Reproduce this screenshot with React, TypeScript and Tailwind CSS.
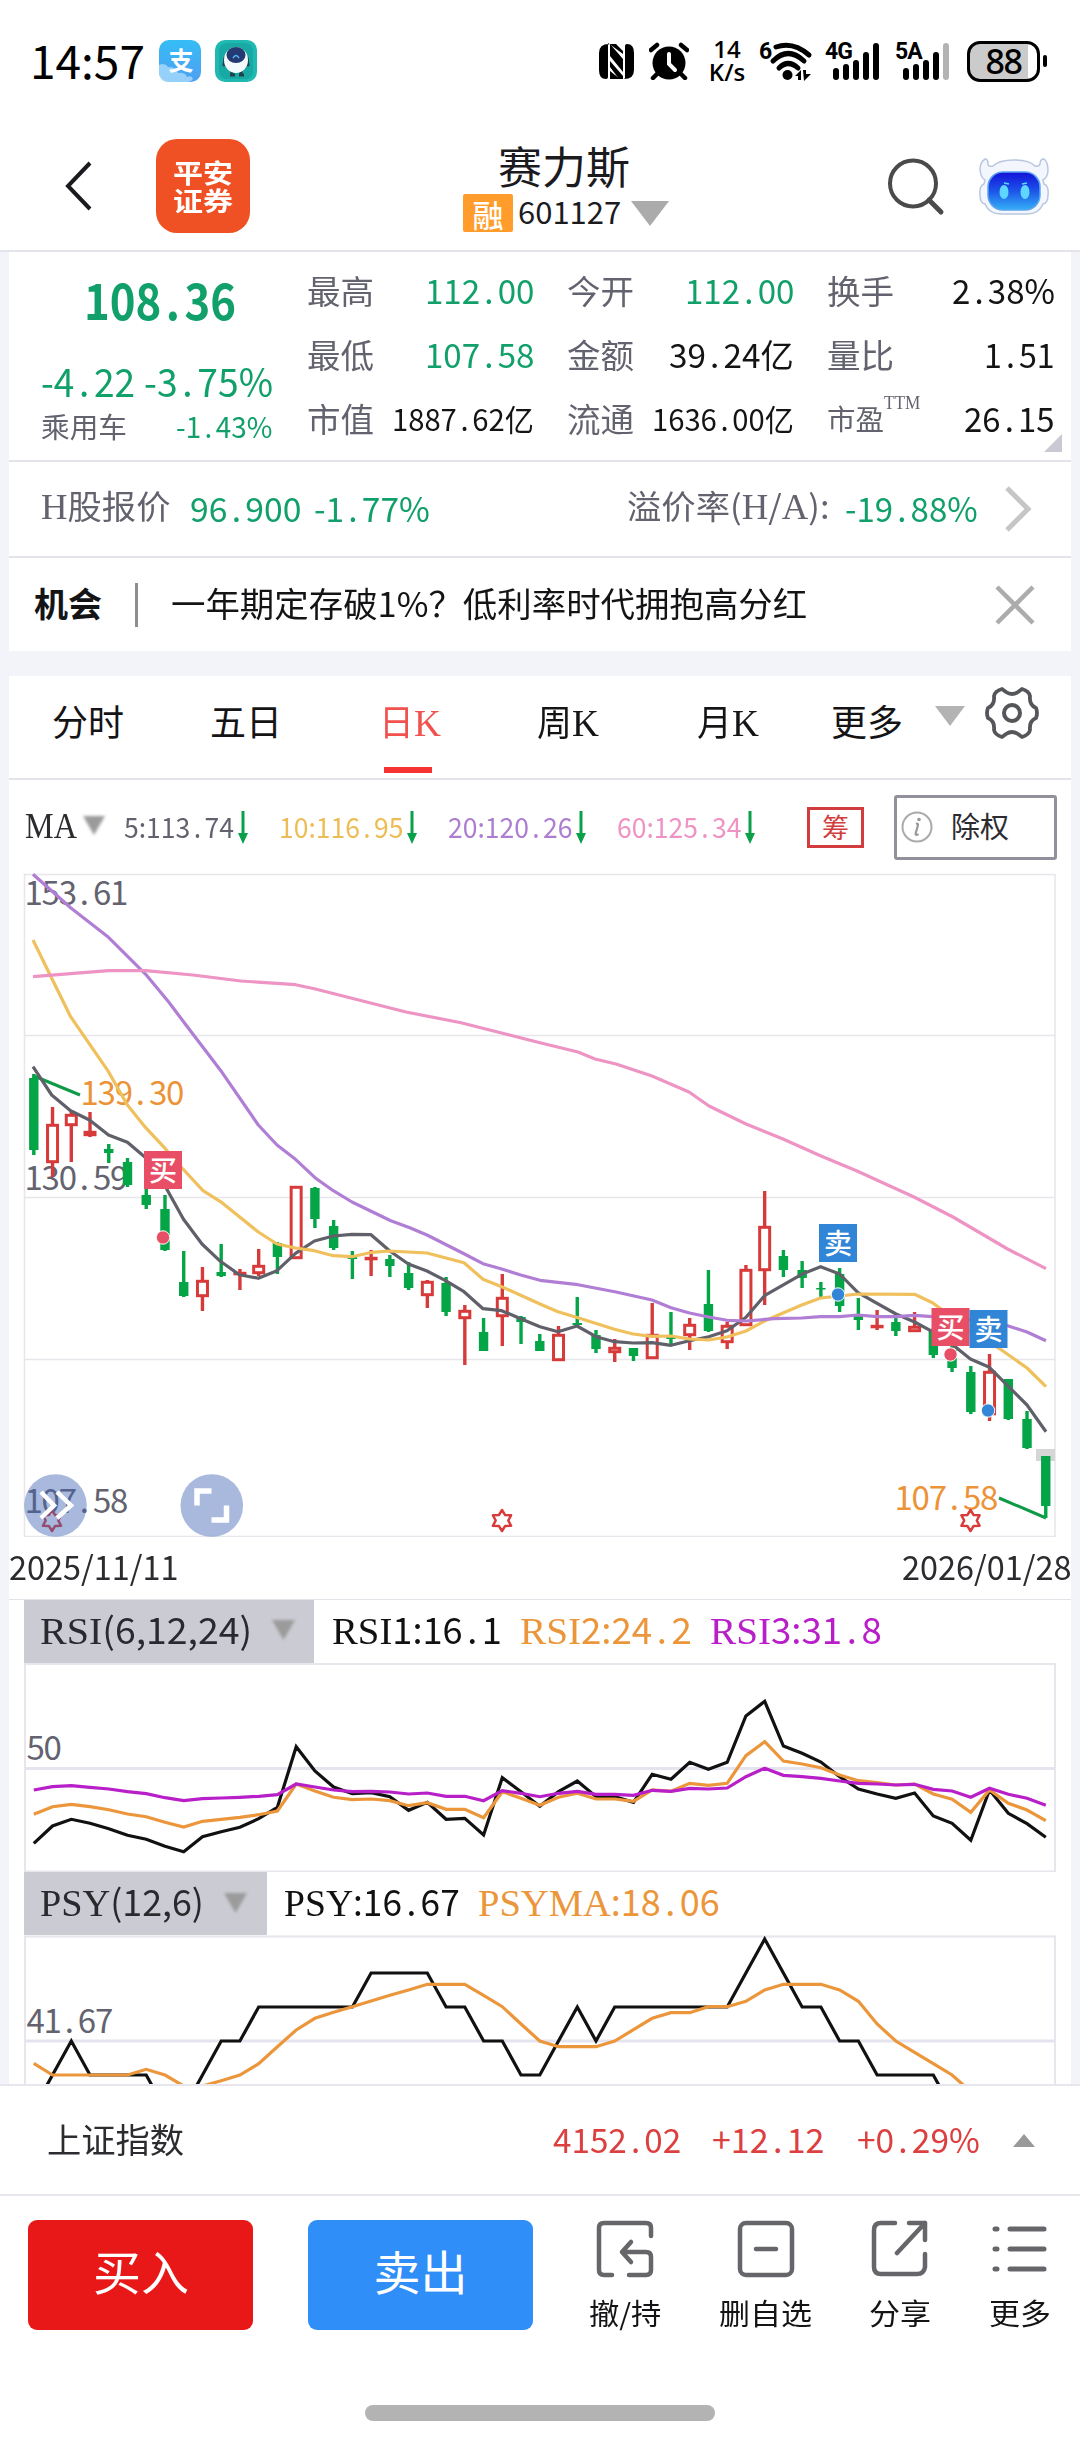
import { useLayoutEffect, useRef, useState } from "react";

/* Text set to a known width: Latin capitals in a serif, digits and hanzi in Noto, full-cell periods. */
function T({ s, w, c = "" }: { s: string; w: number; c?: string }) {
  const ref = useRef<HTMLSpanElement>(null);
  const [k, setK] = useState(1);
  useLayoutEffect(() => {
    if (ref.current) setK(w / ref.current.offsetWidth);
  }, [s, w]);
  const runs = s.match(/[A-Za-z%]+|\.|[^A-Za-z%.]+/g) ?? [];
  return (
    <span className={"block shrink-0 leading-none " + c} style={{ width: w }}>
      <span ref={ref} className="inline-block origin-left whitespace-pre" style={{ transform: `scaleX(${k})` }}>
        {runs.map((r, i) =>
          r === "." ? (
            <span key={i} className="inline-block w-[0.53em] text-center">.</span>
          ) : /[A-Za-z]/.test(r) ? (
            <span key={i} className="font-['Liberation_Serif',serif] text-[1.07em] leading-none">{r}</span>
          ) : (
            <span key={i}>{r}</span>
          )
        )}
      </span>
    </span>
  );
}

const GREEN = "text-[#12a06a]";
const GRAY = "text-[#63636f]";

function Down({ c = "", w = 23, h = 19, fill = "#9b9b9b", soft = false }) {
  return (
    <svg className={"shrink-0 " + c + (soft ? " blur-[1.5px]" : "")} width={w} height={h} viewBox="0 0 10 10" preserveAspectRatio="none">
      <path d="M0 0H10L5 10Z" fill={fill} />
    </svg>
  );
}

function Signal({ label, weak }: { label: string; weak?: boolean }) {
  return (
    <div className="relative h-[38px] w-[55px]">
      <span className="absolute left-0 top-0 font-['Roboto',sans-serif] text-[23px] font-bold leading-[20px] tracking-[-1px]">{label}</span>
      <svg className="absolute left-0 top-0" width="55" height="38">
        <g fill="#000">
          <rect x="8" y="26" width="6" height="12" rx="3" />
          <rect x="18" y="22" width="6" height="16" rx="3" />
          <rect x="28" y="18" width="6" height="20" rx="3" />
          <rect x="38" y="10" width="6" height="28" rx="3" />
          <rect x="48" y="1" width="6" height="37" rx="3" fill={weak ? "#b3b3b3" : "#000"} />
        </g>
      </svg>
    </div>
  );
}

function StatusBar() {
  return (
    <div className="flex h-[122px] items-center pl-[30px] text-black">
      <T s="14:57" w={115} c="pb-[5px] text-[46px]" />
      <svg className="ml-[14px] shrink-0" width="42" height="42" viewBox="0 0 42 42">
        <defs>
          <linearGradient id="pay" x1="0" y1="0" x2="0" y2="1">
            <stop offset="0" stopColor="#35bdf5" />
            <stop offset="1" stopColor="#4f9ff2" />
          </linearGradient>
        </defs>
        <rect width="42" height="42" rx="10" fill="url(#pay)" />
        <path d="M0 25q6-3 9 2q8-1 10 6q7-1 9 4q5-2 6 2q-2 3-6 3H10Q0 42 0 32Z" fill="#a9dcfb" opacity=".8" />
        <text x="22" y="30" textAnchor="middle" fontSize="25" fontWeight="700" fill="#fff" fontFamily="Noto Sans CJK SC, sans-serif">支</text>
      </svg>
      <svg className="ml-[14px] shrink-0" width="42" height="42" viewBox="0 0 42 42">
        <rect width="42" height="42" rx="10" fill="#1fb9b2" />
        <rect x="4" y="3" width="34" height="36" rx="8" fill="#18a9a4" />
        <path d="M17 30v5M26 30v5M15 35h5M24 35h5" stroke="#22404a" strokeWidth="3" />
        <path d="M10 18l-1 7M32 18l1 7" stroke="#22404a" strokeWidth="3" strokeLinecap="round" />
        <ellipse cx="21" cy="20" rx="12" ry="13" fill="#f5fbfc" />
        <ellipse cx="21" cy="15" rx="9.500" ry="8" fill="#243a72" />
        <path d="M18 18q3-5 6 0" fill="none" stroke="#58b4f0" strokeWidth="1.500" />
      </svg>
      <svg className="ml-[342px] shrink-0" width="35" height="37" viewBox="0 0 35 37">
        <path d="M10 1Q0 1 0 10V27Q0 36 7 36Q9 36 9 34V2Z" fill="#000" />
        <path d="M25 36Q35 36 35 27V10Q35 1 28 1Q26 1 26 3V35Z" fill="#000" />
        <path d="M11 1L24 16V29L11 13Z" fill="#000" />
        <path d="M11 18L24 33V36L20 36L11 24Z" fill="#000" />
        <path d="M9 1h8l7 7V11L9 0ZM11 28l10 8h-10Z" fill="#000" />
      </svg>
      <svg className="ml-[15px] shrink-0" width="40" height="38" viewBox="0 0 40 38">
        <circle cx="20" cy="21" r="16.500" fill="#000" />
        <path d="M2 8L8 3M32 3L38 8M8 32L4 36M32 32L36 36" stroke="#000" strokeWidth="4.500" strokeLinecap="round" />
        <path d="M20 12V22L26 28" fill="none" stroke="#fff" strokeWidth="4" strokeLinecap="round" />
      </svg>
      <div className="ml-[17px] w-[42px] pb-[2px] text-center font-['Open_Sans',sans-serif] text-[24px] font-semibold leading-[23px]">
        <div>14</div>
        <div>K/s</div>
      </div>
      <svg className="ml-[11px] shrink-0 overflow-visible" width="54" height="40" viewBox="0 0 54 40">
        <text x="0" y="18" fontSize="23" fontWeight="700" fontFamily="Roboto, sans-serif">6</text>
        <g fill="none" stroke="#000" strokeWidth="5" strokeLinecap="round">
          <path d="M17 6Q34 0 50 14" />
          <path d="M14 20Q29 5 45 20" />
          <path d="M20 27Q29 18 39 27" />
        </g>
        <circle cx="28.500" cy="34" r="5" />
        <path d="M36 35L42 29V39H39V35ZM44 29H47V33H52L45 40Z" />
      </svg>
      <div className="ml-[12px]"><Signal label="4G" /></div>
      <div className="ml-[15px]"><Signal label="5A" weak /></div>
      <div className="ml-[17px] flex h-[41px] w-[73px] items-center rounded-[13px] border-[3px] border-black bg-[linear-gradient(90deg,#cbcbcb_87%,#fff_87%)]">
        <span className="w-full text-center font-['Noto_Sans',sans-serif] text-[34px] font-medium leading-none tracking-[-1.5px]">88</span>
      </div>
      <div className="ml-[3px] h-[12px] w-[4px] rounded-full bg-black" />
    </div>
  );
}

function Header() {
  return (
    <div className="flex h-[130px] border-b-2 border-[#e3e4e9] text-[#1b1b1f]">
      <svg className="ml-[64px] mt-[39px] shrink-0" width="30" height="50" viewBox="0 0 30 50">
        <path d="M26 2L4 25L26 48" fill="none" stroke="#1b1b1f" strokeWidth="4" />
      </svg>
      <div className="ml-[62px] mt-[17px] flex h-[94px] w-[94px] shrink-0 items-center justify-center rounded-[21px] bg-[#ef5124]">
        <div className="scale-y-[0.88] text-[30px] font-bold leading-[31px] text-white">
          <div>平安</div>
          <div>证券</div>
        </div>
      </div>
      <div className="ml-[213px] mt-[21px] w-[206px]">
        <T s="赛力斯" w={132} c="ml-[35px] text-[44px]" />
        <div className="mt-[7px] flex items-center">
          <div className="flex h-[38px] w-[50px] items-center justify-center rounded-[2px] bg-[#ff9c2b] text-[31px] font-medium leading-none text-white">融</div>
          <T s="601127" w={103} c="mb-[5px] ml-[5px] text-[31px]" />
          <Down c="ml-[10px]" w={38} h={25} fill="#ababab" />
        </div>
      </div>
      <svg className="ml-[218px] mt-[35px] shrink-0" width="60" height="60" viewBox="0 0 60 60">
        <circle cx="26" cy="26.500" r="23" fill="none" stroke="#4a4a4a" strokeWidth="4" />
        <path d="M42 43L54 55" stroke="#4a4a4a" strokeWidth="5" strokeLinecap="round" />
      </svg>
      <svg className="ml-[32px] mt-[36px] shrink-0" width="70" height="57" viewBox="0 0 70 57">
        <defs>
          <linearGradient id="face" x1="0" y1="0" x2="0" y2="1">
            <stop offset="0" stopColor="#1410d8" />
            <stop offset=".5" stopColor="#1c55ea" />
            <stop offset="1" stopColor="#35b0f5" />
          </linearGradient>
        </defs>
        <path d="M6 1Q1 4 1 12Q2 20 6 22L5 26Q0 28 1 37Q1 45 6 46Q10 56 22 56H48Q60 56 64 46Q69 45 69 37Q70 28 65 26L64 22Q69 19 69 12Q69 4 65 1Q61 1 61 6Q60 9 56 8Q50 2 35 2Q20 2 14 8Q9 9 9 6Q9 1 6 1Z" fill="#f3f6fc" stroke="#b9c6e0" strokeWidth="1.500" />
        <rect x="9" y="14" width="52" height="38" rx="15" fill="url(#face)" stroke="#5aa4f0" strokeWidth="1.500" />
        <ellipse cx="25" cy="34" rx="4.500" ry="7" fill="#5fd6ff" />
        <ellipse cx="46" cy="34" rx="4.500" ry="7" fill="#5fd6ff" />
        <path d="M25 25l5 1M43 26l5-1" stroke="#5fd6ff" strokeWidth="1.500" />
      </svg>
    </div>
  );
}

type Cell = { l: string; v: string; w: number; c: string };
const cells: Cell[] = [
  { l: "最高", v: "112.00", w: 109, c: "text-[34px] text-[#12a06a]" },
  { l: "今开", v: "112.00", w: 109, c: "text-[34px] text-[#12a06a]" },
  { l: "换手", v: "2.38%", w: 103, c: "text-[34px]" },
  { l: "最低", v: "107.58", w: 109, c: "text-[34px] text-[#12a06a]" },
  { l: "金额", v: "39.24亿", w: 125, c: "text-[33px]" },
  { l: "量比", v: "1.51", w: 71, c: "text-[34px]" },
  { l: "市值", v: "1887.62亿", w: 142, c: "text-[30px]" },
  { l: "流通", v: "1636.00亿", w: 142, c: "text-[30px]" },
  { l: "市盈", v: "26.15", w: 91, c: "text-[34px]" },
];

function Quote() {
  return (
    <div className="flex h-[210px] border-b-2 border-[#e3e4e9] text-[#141416]">
      <div className={"w-[298px] shrink-0 " + GREEN}>
        <T s="108.36" w={152} c="ml-[75px] mt-[21px] text-[50px] font-bold" />
        <div className="mt-[38px] flex pl-8">
          <T s="-4.22" w={94} c="text-[39px]" />
          <T s="-3.75%" w={129} c="ml-[9px] text-[39px]" />
        </div>
        <div className="mt-[11px] flex items-center pl-8">
          <T s="乘用车" w={86} c={"text-[28px] " + GRAY} />
          <T s="-1.43%" w={96} c="ml-[49px] text-[29px]" />
        </div>
      </div>
      <div className="grid shrink-0 grid-cols-[227px_227px_228px] grid-rows-[64px_64px_64px] gap-x-[33px] pt-[6px]">
        {cells.map((x, i) => (
          <div key={i} className="flex items-center justify-between">
            <div className="relative">
              <T s={x.l} w={i === 8 ? 57 : 67} c={(i === 8 ? "text-[28px] " : "text-[33px] ") + GRAY} />
              {i === 8 && <T s="TTM" w={36} c={"absolute left-[57px] top-[-11px] text-[17px] " + GRAY} />}
            </div>
            <T s={x.v} w={x.w} c={x.c} />
          </div>
        ))}
      </div>
      <svg className="-ml-[11px] mt-[182px] shrink-0" width="18" height="18"><path d="M18 0V18H0Z" fill="#c9c9d3" /></svg>
    </div>
  );
}

function HShare() {
  return (
    <div className="flex h-[96px] items-center border-b-2 border-[#e3e4e9] pb-[3px] pl-[32px]">
      <T s="H股报价" w={130} c={"text-[33px] " + GRAY} />
      <T s="96.900" w={111} c={"ml-[19px] text-[34px] " + GREEN} />
      <T s="-1.77%" w={116} c={"ml-[13px] text-[34px] " + GREEN} />
      <T s="溢价率(H/A):" w={202} c={"ml-[197px] text-[33px] " + GRAY} />
      <T s="-19.88%" w={133} c={"ml-[16px] text-[34px] " + GREEN} />
      <svg className="ml-[26px] mt-[3px] shrink-0" width="28" height="46" viewBox="0 0 28 46">
        <path d="M3 2L24 23L3 44" fill="none" stroke="#c6c6c6" strokeWidth="5" />
      </svg>
    </div>
  );
}

function News() {
  return (
    <div className="flex h-[93px] items-center pl-[25px] text-[#141416]">
      <T s="机会" w={68} c="pb-[3px] text-[34px] font-bold" />
      <div className="ml-[33px] h-[44px] w-[3px] bg-[#8e8e92]" />
      <T s="一年期定存破1%？低利率时代拥抱高分红" w={636} c="ml-[33px] pb-[3px] text-[34px]" />
      <svg className="ml-[188px] shrink-0" width="40" height="40" viewBox="0 0 40 40">
        <path d="M2 2L38 38M38 2L2 38" stroke="#acacac" strokeWidth="4.500" />
      </svg>
    </div>
  );
}

function Tabs() {
  return (
    <div className="flex h-[104px] items-start border-b-2 border-[#e3e4e9] pt-[26px] text-[36px] text-[#141416]">
      <T s="分时" w={72} c="ml-[43px]" />
      <T s="五日" w={72} c="ml-[86px]" />
      <div className="ml-[97px] w-[66px]">
        <T s="日K" w={62} c="text-[#f2524f]" />
        <div className="ml-[5px] mt-[24px] h-[6px] w-[48px] bg-[#f63232]" />
      </div>
      <T s="周K" w={62} c="ml-[92px]" />
      <T s="月K" w={62} c="ml-[98px]" />
      <T s="更多" w={72} c="ml-[72px]" />
      <Down c="ml-[32px] mt-[4px]" w={30} h={20} fill="#b3b3b3" />
      <svg className="ml-[20px] mt-[-17px] shrink-0" width="54" height="56" viewBox="0 0 54 56">
        <path d="M17 4L21 7Q27 11 33 7L37 4Q44 6 45 11Q44 20 51 23Q53 28 51 33Q44 36 45 45Q44 50 37 52L33 49Q27 45 21 49L17 52Q10 50 9 45Q10 36 3 33Q1 28 3 23Q10 20 9 11Q10 6 17 4Z" fill="none" stroke="#55565a" strokeWidth="3.800" strokeLinejoin="round" />
        <circle cx="27" cy="28" r="8" fill="none" stroke="#55565a" strokeWidth="4" />
      </svg>
    </div>
  );
}

function Arrow() {
  return (
    <svg className="ml-[4px] shrink-0" width="10" height="34" viewBox="0 0 10 34">
      <path d="M3.500 1H6.500V23H10L5 34L0 23H3.500Z" fill="#0aa04a" />
    </svg>
  );
}

function MaRow() {
  return (
    <div className="flex h-[94px] items-center pl-[16px] text-[28px]">
      <T s="MA" w={52} c="pb-[2px] text-[33px] text-[#2c2c30]" />
      <Down c="ml-[6px] mb-[4px]" w={22} h={19} soft />
      <T s="5:113.74" w={110} c="ml-[19px] pb-[3px] text-[#63636f]" />
      <Arrow />
      <T s="10:116.95" w={124} c="ml-[31px] pb-[3px] text-[#edbd55]" />
      <Arrow />
      <T s="20:120.26" w={124} c="ml-[31px] pb-[3px] text-[#ad7dd2]" />
      <Arrow />
      <T s="60:125.34" w={124} c="ml-[31px] pb-[3px] text-[#ee93c3]" />
      <Arrow />
      <div className="ml-[52px] flex h-[41px] w-[57px] shrink-0 items-center justify-center border-[3px] border-[#d23c3c] text-[27px] leading-none text-[#d23c3c]">
        <span className="pb-[2px]">筹</span>
      </div>
      <div className="ml-[30px] flex h-[65px] w-[163px] shrink-0 items-center rounded-[3px] border-[3px] border-[#91919b] pl-[4px] text-[#2c2c30]">
        <svg width="32" height="34" viewBox="0 0 32 34">
          <circle cx="16" cy="17" r="14.500" fill="none" stroke="#aaa" strokeWidth="2" />
          <path d="M15 14Q17 13 17 15L14.500 24Q15 26 17.500 24" fill="none" stroke="#999" strokeWidth="2.200" />
          <circle cx="18" cy="9.500" r="1.800" fill="#999" />
        </svg>
        <T s="除权" w={58} c="ml-[18px] pb-[3px] text-[29px]" />
      </div>
    </div>
  );
}

const X0 = 33.8;
const STEP = 18.74;
/* rows: up/down, high, body top, body bottom, low */
const candles: [0 | 1, number, number, number, number][] = [
  [0, 1074, 1078, 1150, 1155], [1, 1107, 1124, 1163, 1177], [1, 1112, 1114, 1126, 1162], [1, 1112, 1131, 1136, 1137],
  [0, 1144, 1149, 1153, 1163], [0, 1158, 1162, 1185, 1187], [0, 1180, 1195, 1205, 1209], [0, 1195, 1209, 1250, 1251],
  [0, 1251, 1282, 1296, 1297], [1, 1267, 1280, 1297, 1311], [0, 1244, 1272, 1276, 1277], [1, 1269, 1272, 1275, 1290],
  [1, 1249, 1265, 1274, 1276], [0, 1242, 1243, 1257, 1274], [1, 1186, 1186, 1259, 1259], [0, 1187, 1188, 1219, 1228],
  [0, 1220, 1226, 1248, 1250], [0, 1251, 1257, 1259, 1279], [1, 1250, 1257, 1259, 1276], [0, 1255, 1259, 1266, 1277],
  [0, 1262, 1273, 1288, 1290], [1, 1280, 1281, 1296, 1308], [0, 1277, 1283, 1312, 1316], [1, 1305, 1310, 1319, 1365],
  [0, 1318, 1332, 1351, 1351], [1, 1274, 1297, 1317, 1346], [0, 1316, 1317, 1322, 1344], [0, 1334, 1341, 1351, 1351],
  [1, 1326, 1334, 1361, 1361], [0, 1297, 1323, 1325, 1326], [0, 1330, 1335, 1349, 1353], [1, 1339, 1347, 1353, 1362],
  [0, 1348, 1348, 1356, 1361], [1, 1303, 1334, 1359, 1359], [0, 1312, 1337, 1339, 1344], [1, 1318, 1324, 1336, 1350],
  [0, 1270, 1304, 1331, 1332], [1, 1322, 1325, 1343, 1349], [1, 1265, 1269, 1326, 1326], [1, 1191, 1226, 1271, 1305],
  [0, 1250, 1256, 1270, 1277], [0, 1261, 1270, 1278, 1288], [0, 1282, 1288, 1289, 1298], [0, 1268, 1274, 1306, 1312],
  [0, 1298, 1314, 1320, 1330], [1, 1310, 1325, 1327, 1330], [0, 1317, 1322, 1331, 1336], [1, 1312, 1326, 1332, 1332],
  [0, 1328, 1330, 1355, 1358], [0, 1345, 1350, 1368, 1372], [0, 1366, 1372, 1412, 1414], [1, 1354, 1371, 1415, 1421],
  [0, 1379, 1379, 1419, 1420], [0, 1411, 1419, 1448, 1449], [0, 1456, 1456, 1506, 1518],
];

const ma60 = "33,976.700 70.600,973.700 108.500,970.700 145.700,970.700 192.800,975 241,981 295.500,984.700 314.400,988.700 406,1012 461,1022.700 540,1042.700 578,1052 595,1059 616,1064 652,1076 689,1092 709,1106 746,1124 783,1139 821,1156 857,1171 914,1197 953,1217 1007.600,1249 1046,1268.700";
const ma20 = "33,874.300 70.600,907.700 108.500,937.300 145.700,974.300 168.700,1002 186,1025 222,1072.300 258.300,1125 277,1145 295.500,1159.300 315,1177.700 333.300,1190.700 352,1202 390.800,1220.700 409.800,1227.700 427,1235 464,1253.700 483,1263.700 501.700,1269 520.700,1275 540,1280.300 578,1284.700 616,1292 652,1300 671,1307.700 689.500,1313 708.700,1317 727,1320.300 746,1321 774,1318.700 801.700,1318 820.600,1316.700 839.600,1316.700 858,1315 877,1316.700 896,1316.700 914.600,1315.300 932.500,1316.700 970,1320 1007.600,1325.700 1027,1332 1046,1340.700";
const ma10 = "33,940 70.600,1016.700 108.500,1071.700 127.400,1105 145.700,1127.700 165.300,1148.700 182,1168 203,1190.700 222,1202.700 258.300,1232 277,1244 295.500,1248 314.400,1250.700 333.300,1255.700 352,1256.700 372,1252.300 389,1251 427,1253 464,1262.700 483,1279.300 501.700,1286.700 540,1304 558,1311.700 578,1317.700 614.400,1329.300 633,1334 652,1336.300 671,1336 689.500,1339 708.700,1340 727,1337 746,1331 764,1321.300 783,1313 801.700,1305 820.600,1298 839.600,1296 858,1294 914.600,1294.300 932.500,1302.700 951.500,1316.700 970,1331.700 999,1348.300 1027,1368 1046,1386.700";
const ma5 = "33,1066.700 51.700,1095 70.600,1110.700 89.500,1120 108.500,1135 127.400,1142.300 145.700,1157.700 166.300,1188.300 183.500,1219.300 202,1244 220.400,1261.300 239.300,1274.700 258.300,1278.300 277,1270.700 295.500,1253.300 314.400,1241 333.300,1236 352,1234.300 371,1234.700 389.800,1251 408.400,1264 427,1271 445.600,1280.700 464,1291.700 483,1308.700 501.700,1310.700 520.700,1318.700 540,1326.700 558,1331.700 577,1326 596,1336.700 614.400,1341.700 633,1343 652,1342.700 671,1345.300 689.500,1340.700 708.700,1336.700 727,1330.700 746,1317.300 764.500,1295.700 801.700,1274.300 820.600,1266.700 839.600,1274 858,1292.700 896,1314 914.600,1322 932.500,1331.700 953,1345 970.400,1359 989.400,1367.300 1007.600,1385.700 1027,1405 1046,1431.700";

/* Number drawn in equal cells, as the chart labels are. */
function Digits({ s, x, y, fill = "#63636f" }: { s: string; x: number; y: number; fill?: string }) {
  const xs = s.split("").map((ch, i) => x - 1.5 + i * 17.1 + (ch === "." ? 4 : 0)).join(" ");
  return <text x={xs} y={y} fontSize="33" fill={fill} fontFamily="Noto Sans CJK SC, sans-serif">{s}</text>;
}

function Tag({ s, x, y, fill }: { s: string; x: number; y: number; fill: string }) {
  return (
    <g>
      <rect x={x} y={y} width="38" height="38" fill={fill} />
      <text x={x + 19} y={y + 29.5} textAnchor="middle" fontSize="28" fontWeight="500" fill="#fff" fontFamily="Noto Sans CJK SC, sans-serif">{s}</text>
    </g>
  );
}

function Star({ x }: { x: number }) {
  const pts = Array.from({ length: 12 }, (_, i) => {
    const r = i % 2 ? 6.3 : 10.5;
    const a = (i * Math.PI) / 6 - Math.PI / 2;
    return `${x + r * Math.cos(a)},${1520.5 + r * Math.sin(a)}`;
  }).join(" ");
  return <polygon points={pts} fill="none" stroke="#d93a3a" strokeWidth="2.500" strokeLinejoin="round" />;
}

function KChart() {
  return (
    <svg className="-mt-px block" width="1062" height="664" viewBox="9 873 1062 664">
      <g fill="none" stroke="#e6e6ec" strokeWidth="1.500">
        <rect x="24.500" y="874.500" width="1030.500" height="662" />
        <path d="M24.500 1035.500H1055M24.500 1197.500H1055M24.500 1359.500H1055" />
      </g>
      <rect x="1036" y="1449" width="19" height="12" fill="#d6d6d6" />
      <Digits s="153.61" x={26} y={905} />
      <Digits s="130.59" x={26} y={1190} />
      <Digits s="107.58" x={26} y={1513} />
      <Digits s="139.30" x={82} y={1105} fill="#ec9338" />
      <Digits s="107.58" x={896} y={1510} fill="#ec9338" />
      <g fill="none" stroke="#0f9a48" strokeWidth="3">
        <path d="M34 1076L80 1095M999 1498L1046 1518" />
      </g>
      {candles.map(([up, hi, t, b, lo], i) => {
        const x = X0 + i * STEP;
        if (!up)
          return (
            <g key={i} fill="#04a546">
              <rect x={x - 1.7} y={hi} width="3.400" height={lo - hi} />
              <rect x={x - 4.7} y={t} width="9.400" height={Math.max(b - t, 1.5)} />
            </g>
          );
        return (
          <g key={i}>
            <path d={`M${x} ${hi}V${t}M${x} ${b}V${lo}`} stroke="#d53b3b" strokeWidth="3.400" />
            <rect x={x - 5} y={t + 1.3} width="10" height={Math.max(b - t - 2.6, 0.5)} fill="#fff" stroke="#d83a3a" strokeWidth="3" />
          </g>
        );
      })}
      <g fill="none" strokeWidth="3.200" strokeLinejoin="round">
        <polyline points={ma5} stroke="#5f6069" />
        <polyline points={ma10} stroke="#efc05c" />
        <polyline points={ma20} stroke="#b07ed4" />
        <polyline points={ma60} stroke="#ee94c4" />
      </g>
      <g stroke="#fff" strokeWidth="1">
        <circle cx="163" cy="1237.500" r="6.700" fill="#e84f67" />
        <circle cx="838" cy="1294.500" r="6.700" fill="#3386d7" />
        <circle cx="950.500" cy="1354.500" r="6.700" fill="#e84f67" />
        <circle cx="988" cy="1410.500" r="6.700" fill="#3386d7" />
      </g>
      <Tag s="买" x={144} y={1151} fill="#e84f67" />
      <Tag s="卖" x={819} y={1224} fill="#3185d6" />
      <Tag s="买" x={931.5} y={1308} fill="#e84f67" />
      <Tag s="卖" x={969.5} y={1310} fill="#3185d6" />
      <Star x={52} />
      <Star x={502} />
      <Star x={970.5} />
      <g fill="#4164b4" fillOpacity=".45">
        <circle cx="55.500" cy="1505.500" r="31.300" />
        <circle cx="211.800" cy="1505.500" r="31.300" />
      </g>
      <g fill="none" stroke="#fff" strokeWidth="4.500">
        <path d="M41 1492L54 1505.500L41 1518M57 1492L71 1505.500L57 1518" />
        <path strokeWidth="5.500" d="M211.500 1491H197V1505.500M211.500 1520H226.500V1505.500" />
      </g>
    </svg>
  );
}

const line = (ys: number[], top: number) => ys.map((v, i) => `${(X0 + i * STEP).toFixed(1)},${(top + v / 3).toFixed(1)}`).join(" ");

const rsi1 = [760, 708, 688, 700, 716, 736, 748, 769, 785, 740, 725, 712, 686, 652, 470, 543, 591, 611, 608, 620, 661, 637, 688, 685, 735, 563, 605, 649, 605, 573, 620, 620, 637, 553, 568, 517, 538, 517, 378, 334, 468, 490, 516, 560, 597, 612, 625, 609, 678, 700, 751, 600, 670, 701, 742];
const rsi2 = [673, 650, 643, 650, 659, 672, 680, 697, 711, 694, 688, 682, 674, 663, 582, 603, 622, 629, 627, 632, 647, 638, 658, 658, 683, 605, 625, 646, 622, 610, 627, 627, 634, 600, 604, 580, 586, 580, 497, 455, 513, 522, 533, 555, 572, 578, 585, 582, 612, 628, 667, 600, 640, 660, 692];
const rsi3 = [600, 590, 587, 592, 597, 605, 611, 623, 632, 626, 624, 622, 619, 614, 582, 591, 600, 605, 604, 606, 612, 609, 619, 619, 632, 602, 610, 620, 610, 604, 613, 613, 616, 601, 604, 595, 597, 594, 560, 535, 556, 560, 565, 573, 580, 582, 585, 583, 598, 603, 622, 595, 613, 625, 646];
const psy = [747, 645, 543, 645, 645, 645, 645, 747, 747, 645, 543, 543, 441, 441, 441, 441, 441, 441, 339, 339, 339, 339, 441, 441, 543, 543, 645, 645, 543, 441, 543, 441, 441, 441, 441, 441, 441, 441, 339, 237, 339, 441, 441, 543, 543, 645, 645, 645, 645, 747];
const psyma = [610, 645, 645, 645, 645, 645, 628, 645, 678, 678, 662, 645, 611, 560, 510, 475, 457, 440, 423, 406, 390, 373, 373, 373, 406, 440, 492, 543, 560, 560, 560, 543, 509, 475, 458, 458, 440, 440, 424, 390, 373, 373, 373, 390, 424, 492, 543, 577, 611, 645, 695];

function Rsi() {
  return (
    <div className="h-[273px] border-t border-[#e3e4e9] pl-[15px]">
      <div className="flex h-[63px] items-center text-[36px]">
        <div className="flex h-[63px] w-[290px] items-center bg-[#cbcbd4] pl-[16px] text-[#2a2a2e]">
          <T s="RSI(6,12,24)" w={212} c="pb-[3px]" />
          <Down c="ml-[20px] mb-[3px]" w={23} h={20} soft />
        </div>
        <T s="RSI1:16.1" w={170} c="ml-[18px] pb-[3px] text-[#111]" />
        <T s="RSI2:24.2" w={172} c="ml-[18px] pb-[3px] text-[#ec963c]" />
        <T s="RSI3:31.8" w={172} c="ml-[18px] pb-[3px] text-[#b81fc9]" />
      </div>
      <svg className="block" width="1032" height="209" viewBox="24 1663 1032 209">
        <rect x="25" y="1664" width="1030" height="207.500" fill="none" stroke="#e6e6ec" strokeWidth="2" />
        <path d="M25 1768.500H1055" stroke="#e4e4ee" strokeWidth="3" />
        <Digits s="50" x={28} y={1760} />
        <g fill="none" strokeWidth="3.200">
          <polyline points={line(rsi1, 1590)} stroke="#111" />
          <polyline points={line(rsi2, 1590)} stroke="#ec963c" />
          <polyline points={line(rsi3, 1590)} stroke="#b81fc9" />
        </g>
      </svg>
    </div>
  );
}

function Psy() {
  return (
    <div className="pl-[15px]">
      <div className="flex h-[63px] items-center text-[36px]">
        <div className="flex h-[63px] w-[243px] items-center bg-[#cbcbd4] pl-[16px] text-[#2a2a2e]">
          <T s="PSY(12,6)" w={164} c="pb-[2px]" />
          <Down c="ml-[20px] mb-[2px]" w={23} h={20} soft />
        </div>
        <T s="PSY:16.67" w={176} c="ml-[17px] pb-[2px] text-[#111]" />
        <T s="PSYMA:18.06" w={242} c="ml-[18px] pb-[2px] text-[#ec963c]" />
      </div>
      <svg className="block" width="1032" height="149" viewBox="24 1935 1032 149">
        <rect x="25" y="1936.500" width="1030" height="208" fill="none" stroke="#e6e6ec" strokeWidth="2" />
        <path d="M25 2041H1055" stroke="#e4e4ee" strokeWidth="3" />
        <Digits s="41.67" x={28} y={2033} />
        <g fill="none" strokeWidth="3.200">
          <polyline points={line(psy, 1860)} stroke="#111" />
          <polyline points={line(psyma, 1860)} stroke="#ec963c" />
        </g>
      </svg>
    </div>
  );
}

function Action({ label, w, c, children }: { label: string; w: number; c: string; children: React.ReactNode }) {
  return (
    <div className={"flex shrink-0 flex-col items-center " + c}>
      <svg width="58" height="58" viewBox="0 0 58 58" fill="none" stroke="#66666a" strokeWidth="4.500" strokeLinecap="round" strokeLinejoin="round">
        {children}
      </svg>
      <T s={label} w={w} c="mt-[20px] text-[29px] text-[#141416]" />
    </div>
  );
}

function Bottom() {
  return (
    <div className="bg-white">
      <div className="flex h-[112px] items-center border-y-2 border-[#e6e6ec] pl-[47px] text-[#dc3f3f]">
        <T s="上证指数" w={137} c="pb-[2px] text-[34px] text-[#2c2c30]" />
        <T s="4152.02" w={128} c="ml-[369px] pb-[3px] text-[34px]" />
        <T s="+12.12" w={112} c="ml-[31px] pb-[3px] text-[34px]" />
        <T s="+0.29%" w={123} c="ml-[33px] pb-[3px] text-[34px]" />
        <svg className="ml-[33px]" width="22" height="13"><path d="M11 0L22 13H0Z" fill="#999" /></svg>
      </div>
      <div className="flex h-[209px] items-start pt-[24px]">
        <div className="ml-[28px] flex h-[110px] w-[225px] shrink-0 items-center justify-center rounded-[9px] bg-[#e91818] text-white">
          <T s="买入" w={96} c="pb-[11px] text-[47px]" />
        </div>
        <div className="ml-[55px] flex h-[110px] w-[225px] shrink-0 items-center justify-center rounded-[9px] bg-[#2f8ef8] text-white">
          <T s="卖出" w={94} c="pb-[11px] text-[47px]" />
        </div>
        <Action label="撤/持" w={72} c="ml-[56px]">
          <path d="M55 16V8Q55 3 50 3H8Q3 3 3 8V50Q3 55 8 55H16M33 55H50Q55 55 55 50V37Q55 32 50 32H26M35 22L26 32L35 42" />
        </Action>
        <Action label="删自选" w={93} c="ml-[58px]">
          <rect x="3" y="3" width="52" height="52" rx="6" />
          <path d="M19 29H39" />
        </Action>
        <Action label="分享" w={62} c="ml-[57px]">
          <path d="M24 3H10Q3 3 3 10V47Q3 54 10 54H46Q53 54 54 47V34M54 20V3H38M54 3L26 33" />
        </Action>
        <Action label="更多" w={62} c="ml-[58px]">
          <path d="M4 9H6M4 29H6M4 49H6M19 9H53M19 29H53M19 49H53" strokeWidth="5" />
        </Action>
      </div>
      <div className="mx-auto h-[16px] w-[350px] rounded-full bg-[#b3b3b3]" />
    </div>
  );
}

export default function App() {
  return (
    <div className="flex h-[2440px] w-[1080px] flex-col overflow-hidden bg-white font-['Noto_Sans_CJK_SC',sans-serif]">
      <StatusBar />
      <Header />
      <div className="h-[1832px] overflow-hidden bg-[#f3f4f9] px-[9px]">
        <div className="bg-white">
          <Quote />
          <HShare />
          <News />
        </div>
        <div className="mt-[25px] bg-white">
          <Tabs />
          <MaRow />
          <KChart />
          <div className="flex h-[62px] items-center justify-between pb-[3px] text-[33px] text-[#2c2c30]">
            <T s="2025/11/11" w={169} />
            <T s="2026/01/28" w={169} />
          </div>
          <Rsi />
          <Psy />
        </div>
      </div>
      <Bottom />
    </div>
  );
}
